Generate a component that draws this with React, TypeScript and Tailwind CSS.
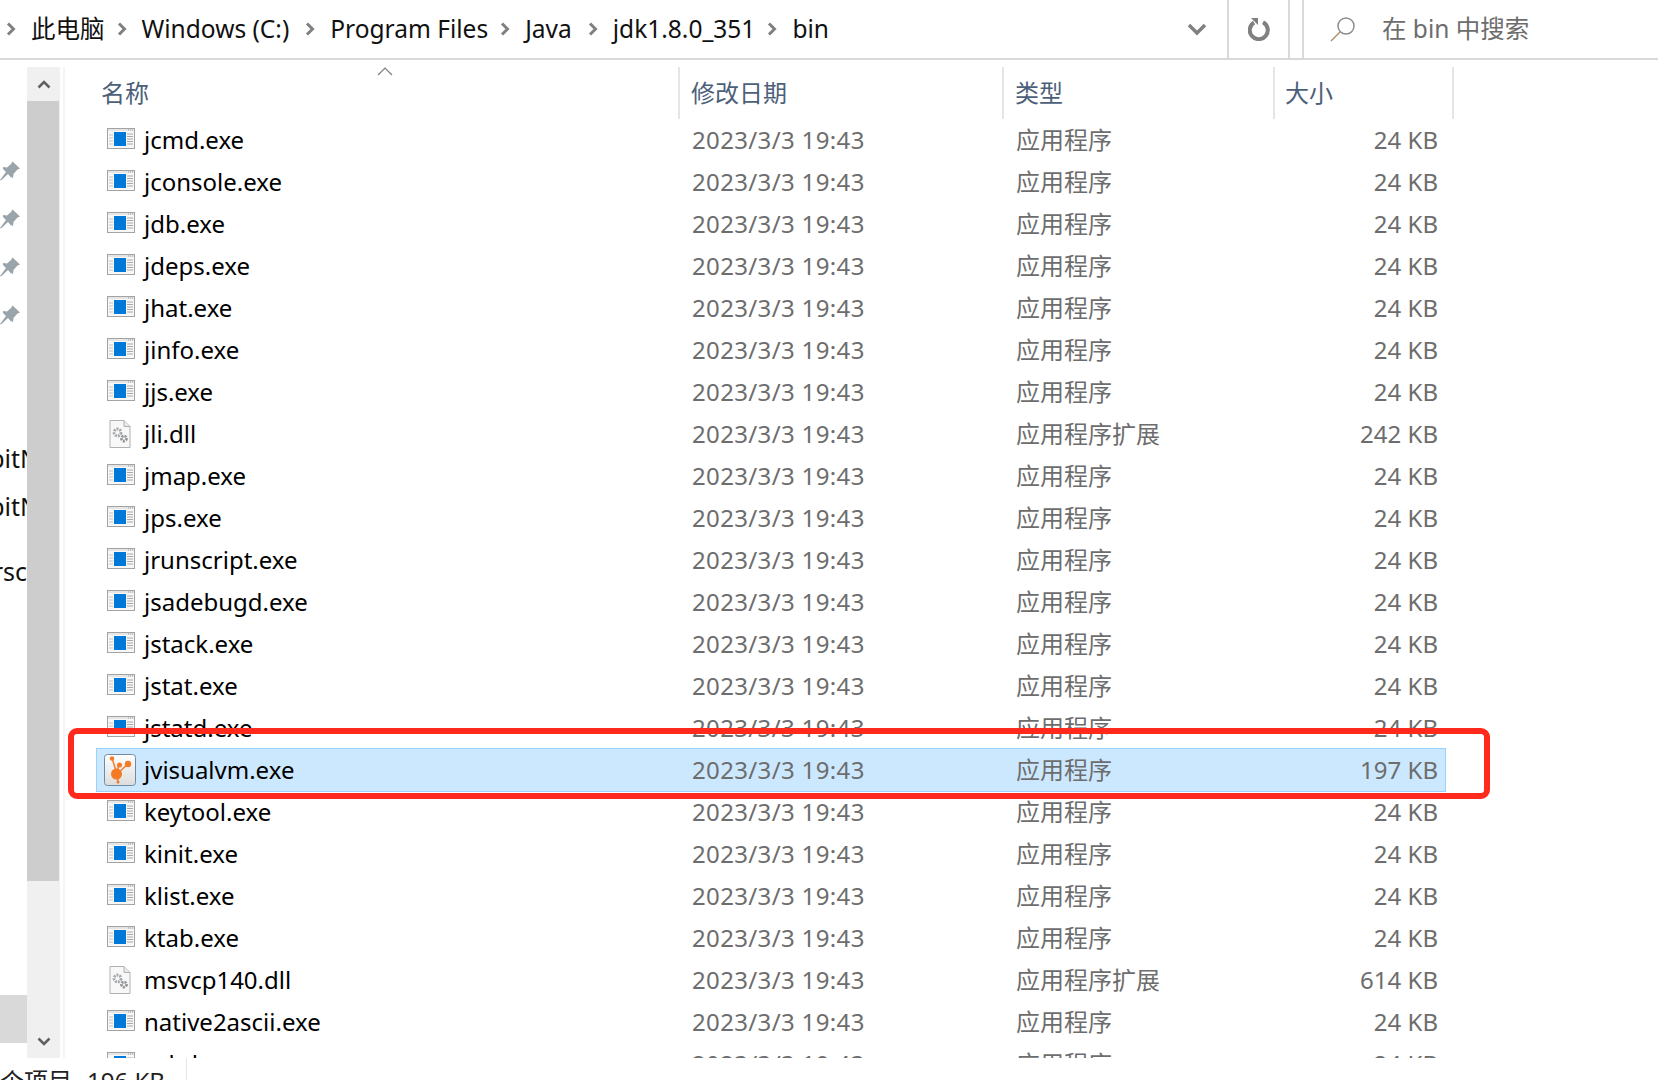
const fontStack = "font-['Noto_Sans','Noto_Sans_CJK_SC',sans-serif]";

type FileRow = { name: string; type?: string; size: string; kind?: "exe" | "dll" | "visual" };

const files: FileRow[] = [
  { name: "jcmd.exe", size: "24 KB" },
  { name: "jconsole.exe", size: "24 KB" },
  { name: "jdb.exe", size: "24 KB" },
  { name: "jdeps.exe", size: "24 KB" },
  { name: "jhat.exe", size: "24 KB" },
  { name: "jinfo.exe", size: "24 KB" },
  { name: "jjs.exe", size: "24 KB" },
  { name: "jli.dll", size: "242 KB", kind: "dll", type: "应用程序扩展" },
  { name: "jmap.exe", size: "24 KB" },
  { name: "jps.exe", size: "24 KB" },
  { name: "jrunscript.exe", size: "24 KB" },
  { name: "jsadebugd.exe", size: "24 KB" },
  { name: "jstack.exe", size: "24 KB" },
  { name: "jstat.exe", size: "24 KB" },
  { name: "jstatd.exe", size: "24 KB" },
  { name: "jvisualvm.exe", size: "197 KB", kind: "visual" },
  { name: "keytool.exe", size: "24 KB" },
  { name: "kinit.exe", size: "24 KB" },
  { name: "klist.exe", size: "24 KB" },
  { name: "ktab.exe", size: "24 KB" },
  { name: "msvcp140.dll", size: "614 KB", kind: "dll", type: "应用程序扩展" },
  { name: "native2ascii.exe", size: "24 KB" },
  { name: "orbd.exe", size: "24 KB" },
];

function ExeIcon() {
  return (
    <svg width="28" height="22" viewBox="0 0 28 22" className="-translate-y-px">
      <rect x="0.5" y="0.5" width="27" height="20" fill="#f7f7f7" stroke="#a3a3a3" />
      <rect x="1" y="1" width="26" height="2" fill="#e6e6e6" />
      <path d="M21 2h1M23 2h1M25 2h1" stroke="#9a9a9a" />
      <rect x="7" y="4" width="12" height="14" fill="#0078d7" />
      <path d="M2 7h4M2 10h4M2 13h4M2 16h4" stroke="#c4c4c4" strokeWidth="1" />
      <path d="M20 6h6M20 8.500h6M20 11h6M20 13.500h6M20 16h6" stroke="#a8a8a8" strokeWidth="1" />
    </svg>
  );
}

function DllIcon() {
  return (
    <svg width="22" height="28" viewBox="0 0 22 28" className="-translate-x-px">
      <path d="M1 .5h14l6 6v21H1z" fill="#f8f8f8" stroke="#b0b0b0" />
      <path d="M15 .5v6h6" fill="#e8e8e8" stroke="#b0b0b0" />
      <circle cx="8.500" cy="12.500" r="3.500" fill="none" stroke="#a4a8ac" strokeWidth="2.800" strokeDasharray="2 1" />
      <circle cx="15" cy="18.500" r="2.500" fill="none" stroke="#8e9296" strokeWidth="2.800" strokeDasharray="2 1" />
    </svg>
  );
}

function VisualIcon() {
  return (
    <svg width="32" height="32" viewBox="0 0 32 32" className="-translate-x-px">
      <defs>
        <linearGradient id="vmbg" x1="0" y1="0" x2="0" y2="1">
          <stop offset="0" stopColor="#ffffff" />
          <stop offset="1" stopColor="#dcdcdc" />
        </linearGradient>
      </defs>
      <rect x="0.500" y="0.500" width="31" height="31" rx="3" fill="url(#vmbg)" stroke="#6f8aa3" />
      <g stroke="#f57a24" strokeWidth="1.500">
        <path d="M8 4 L13 20 M15 18 L24 10 M13 19 L15 10 M13 20 L14 28" />
      </g>
      <g fill="#f57a24">
        <circle cx="8" cy="4.500" r="2.200" />
        <circle cx="15.500" cy="11" r="2.500" />
        <circle cx="24" cy="10" r="3.200" />
        <circle cx="12.500" cy="20" r="5.500" />
        <circle cx="14" cy="28" r="1.500" />
      </g>
    </svg>
  );
}

function Pin() {
  return (
    <svg width="20" height="20" viewBox="0 0 20 20" className="translate-y-px">
      <path d="M12.500 0.500 L20 7.500 L17.500 8.500 L13.500 13 L13 17 L10.500 16 L8 13 L1 19.500 L0 19 L6 11 L3 8 L3 6 L7 6.500 L11 3 Z" fill="#9aa5ab" />
    </svg>
  );
}

function Crumb({ children, left }: { children?: React.ReactNode; left: string }) {
  return (
    <div className={`flex items-center ${left}`}>
      <svg width="12" height="14" viewBox="0 0 12 14" className="shrink-0">
        <path d="M3 1.500 L8.500 7 L3 12.500" fill="none" stroke="#808080" strokeWidth="3" />
      </svg>
      {children}
    </div>
  );
}

function Chevron({ up }: { up?: boolean }) {
  return (
    <svg width="14" height="9" viewBox="0 0 14 9">
      <path d={up ? "M1.500 7.500 L7 2 L12.500 7.500" : "M1.500 1.500 L7 7 L12.500 1.500"} fill="none" stroke="#606060" strokeWidth="2.500" />
    </svg>
  );
}

export default function App() {
  return (
    <div className={`relative flex h-[1080px] w-[1658px] flex-col overflow-hidden bg-white ${fontStack}`}>
      {/* address bar */}
      <div className="flex h-[60px] shrink-0 border-b-2 border-[#d9d9d9]">
        <div className="flex w-[1227px] shrink-0 items-center text-[24.5px] text-[#111]">
          <Crumb left="ml-[5px]"><span className="ml-[14px]">此电脑</span></Crumb>
          <Crumb left="ml-[11px]"><span className="ml-[14px]">Windows (C:)</span></Crumb>
          <Crumb left="ml-[15px]"><span className="ml-[14px]">Program Files</span></Crumb>
          <Crumb left="ml-[11px]"><span className="ml-[14px]">Java</span></Crumb>
          <Crumb left="ml-[15px]"><span className="ml-[14px]">jdk1.8.0_351</span></Crumb>
          <Crumb left="ml-[11px]"><span className="ml-[14px]">bin</span></Crumb>
          <div className="ml-auto mr-[20px]">
            <svg width="20" height="13" viewBox="0 0 20 13">
              <path d="M2 2 L10 10 L18 2" fill="none" stroke="#808080" strokeWidth="3.500" />
            </svg>
          </div>
        </div>
        <div className="flex w-[63px] shrink-0 items-center justify-center border-x-2 border-[#d9d9d9] pl-[2px]">
          <svg width="24" height="24" viewBox="0 0 24 24">
            <path d="M15 5.200 A9 9 0 1 1 6 5.500" fill="none" stroke="#808080" strokeWidth="4" />
            <path d="M3 1 L10 1 L10 8 Z" fill="#808080" />
          </svg>
        </div>
        <div className="ml-[12px] flex flex-1 items-center border-l-2 border-[#d9d9d9] pl-[26px] text-[24.5px] text-[#6d6d6d]">
          <svg width="26" height="26" viewBox="0 0 26 26">
            <circle cx="16" cy="10" r="8" fill="none" stroke="#8c8c8c" strokeWidth="1.500" />
            <path d="M10 16 L1 25" stroke="#b08d6a" strokeWidth="1.500" />
          </svg>
          <span className="ml-[26px]">在 bin 中搜索</span>
        </div>
      </div>

      <div className="flex min-h-0 flex-1">
        {/* nav pane, cut off by the window crop */}
        <div className="flex w-[27px] shrink-0 flex-col overflow-hidden pb-[15px] pt-[86px]">
          {[0, 1, 2, 3].map((i) => (
            <div key={i} className="flex h-[48px] shrink-0 items-center">
              <Pin />
            </div>
          ))}
          <div className="mt-[97px] -mr-[12px] flex h-[48px] shrink-0 items-center justify-end whitespace-nowrap text-[25px] text-[#111]">bitN</div>
          <div className="-mr-[12px] flex h-[48px] shrink-0 items-center justify-end whitespace-nowrap text-[25px] text-[#111]">bitN</div>
          <div className="mt-[17px] flex h-[48px] shrink-0 items-center justify-end whitespace-nowrap text-[25px] text-[#111]">rsc</div>
          <div className="mt-auto h-[48px] shrink-0 bg-[#d9d9d9]" />
        </div>

        {/* scrollbar */}
        <div className="mt-[7px] flex w-[33px] shrink-0 flex-col bg-[#f0f0f0]">
          <div className="flex h-[34px] shrink-0 items-center justify-center"><Chevron up /></div>
          <div className="h-[780px] w-[32px] shrink-0 bg-[#cdcdcd]" />
          <div className="mt-auto flex h-[34px] shrink-0 items-center justify-center"><Chevron /></div>
        </div>
        <div className="ml-[3px] mt-[7px] w-[2px] shrink-0 bg-[#f5f5f5]" />

        {/* file list */}
        <div className="relative flex min-w-0 flex-1 flex-col overflow-hidden">
          <div className="mt-[7px] flex h-[52px] shrink-0 items-center text-[24px] text-[#4c607a]">
            <div className="h-full w-[613px] shrink-0 pl-[36px] leading-[52px]">名称</div>
            <div className="h-full w-[324px] shrink-0 border-l-2 border-[#e5e5e5] pl-[11px] leading-[52px]">修改日期</div>
            <div className="h-full w-[271px] shrink-0 border-l-2 border-[#e5e5e5] pl-[11px] leading-[52px]">类型</div>
            <div className="h-full w-[181px] shrink-0 border-x-2 border-[#e5e5e5] pl-[10px] leading-[52px]">大小</div>
          </div>
          <svg width="16" height="9" viewBox="0 0 16 9" className="absolute left-[312px] top-[7px]">
            <path d="M1 8 L8 1 L15 8" fill="none" stroke="#7d7d7d" strokeWidth="1.200" />
          </svg>
          <div className="min-h-0 flex-1 overflow-hidden pl-[31px] pr-[212px]">
            {files.map((file) => (
              <Row key={file.name} file={file} />
            ))}
          </div>
        </div>
      </div>

      {/* status bar, cropped at the bottom */}
      <div className="flex h-[22px] shrink-0 items-start">
        <div className="h-full w-[187px] shrink-0 overflow-hidden whitespace-nowrap border-r border-[#e5e5e5] pt-[9px] text-[24px] leading-[28px] text-[#222]">
          个项目<span className="ml-[15px]">196 KB</span>
        </div>
      </div>

      {/* hand-drawn annotation */}
      <div className="pointer-events-none absolute left-[68px] top-[728px] h-[71px] w-[1422px] rounded-[9px] border-[6px] border-[#ff2a1c]" />
    </div>
  );
}

function Row({ file }: { file: FileRow }) {
  const selected = file.kind === "visual";
  return (
    <div
      className={
        selected
          ? "relative -my-px flex h-[44px] items-center border border-[#99d1ff] bg-[#cce8ff] text-[24px]"
          : "flex h-[42px] items-center border border-transparent text-[24px]"
      }
    >
      <div className="flex w-[47px] shrink-0 items-center justify-center">
        {file.kind === "dll" ? <DllIcon /> : file.kind === "visual" ? <VisualIcon /> : <ExeIcon />}
      </div>
      <div className="w-[548px] shrink-0 whitespace-nowrap text-black">{file.name}</div>
      <div className="w-[324px] shrink-0 whitespace-nowrap tracking-[0.35px] text-[#6d6d6d]">2023/3/3 19:43</div>
      <div className="w-[270px] shrink-0 whitespace-nowrap text-[#6d6d6d]">{file.type ?? "应用程序"}</div>
      <div className="w-[152px] shrink-0 whitespace-nowrap text-right text-[#6d6d6d]">{file.size}</div>
    </div>
  );
}
